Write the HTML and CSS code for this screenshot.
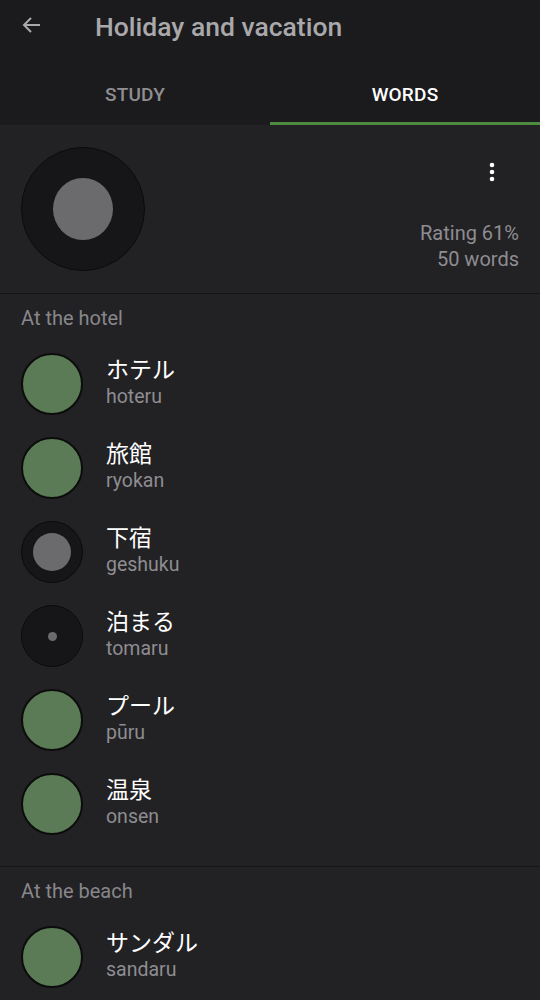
FILE: index.html
```html
<!DOCTYPE html>
<html>
<head>
<meta charset="utf-8">
<link rel="stylesheet" href="styles.css">
</head>
<body>
<div class="page">
  <header class="appbar">
    <svg class="back" width="24" height="24" viewBox="0 0 24 24"><path d="M20 12H5M11 5l-7 7 7 7" fill="none" stroke="#a9a8ab" stroke-width="2"/></svg>
    <h1 class="title">Holiday and vacation</h1>
  </header>
  <nav class="tabs">
    <div class="tab">STUDY</div>
    <div class="tab active">WORDS</div>
  </nav>
  <section class="summary">
    <div class="big-dot"><div class="big-inner"></div></div>
    <div class="summary-right">
      <svg class="kebab" width="6" height="20" viewBox="0 0 6 20"><circle cx="3" cy="3" r="2.3" fill="#fff"/><circle cx="3" cy="10" r="2.3" fill="#fff"/><circle cx="3" cy="17" r="2.3" fill="#fff"/></svg>
      <div class="stats">
        <div>Rating 61%</div>
        <div>50 words</div>
      </div>
    </div>
  </section>
  <section class="group">
    <div class="group-title">At the hotel</div>
    <div class="item"><div class="dot green"></div><div class="words"><div class="jp">ホテル</div><div class="ro">hoteru</div></div></div>
    <div class="item"><div class="dot green"></div><div class="words"><div class="jp">旅館</div><div class="ro">ryokan</div></div></div>
    <div class="item"><div class="dot dark"><div class="inner mid"></div></div><div class="words"><div class="jp">下宿</div><div class="ro">geshuku</div></div></div>
    <div class="item"><div class="dot dark"><div class="inner small"></div></div><div class="words"><div class="jp">泊まる</div><div class="ro">tomaru</div></div></div>
    <div class="item"><div class="dot green"></div><div class="words"><div class="jp">プール</div><div class="ro">pūru</div></div></div>
    <div class="item"><div class="dot green"></div><div class="words"><div class="jp">温泉</div><div class="ro">onsen</div></div></div>
  </section>
  <section class="group">
    <div class="group-title">At the beach</div>
    <div class="item"><div class="dot green"></div><div class="words"><div class="jp">サンダル</div><div class="ro">sandaru</div></div></div>
  </section>
</div>
</body>
</html>
```
FILE: styles.css
```css
html, body {
  margin: 0;
  padding: 0;
  background: #222124;
}
body {
  font-family: Roboto, "Noto Sans CJK JP", sans-serif;
}
.page {
  width: 540px;
  height: 1000px;
  overflow: hidden;
  background: #222124;
}
.appbar {
  height: 52px;
  background: #1b1a1d;
  display: flex;
  align-items: center;
  padding-left: 20px;
}
.back {
  display: block;
  margin-top: -2px;
}
.title {
  margin: 0 0 0 51px;
  font-size: 26.5px;
  font-weight: 500;
  color: #a9a8ab;
}
.tabs {
  display: flex;
  height: 73px;
  background: #1b1a1d;
}
.tab {
  flex: 1;
  box-sizing: border-box;
  padding-top: 31px;
  text-align: center;
  font-size: 19px;
  font-weight: 500;
  color: #8f8e92;
  letter-spacing: 0.2px;
}
.tab.active {
  color: #ffffff;
  border-bottom: 3px solid #4f8a41;
}
.summary {
  height: 168px;
  display: flex;
  align-items: center;
  justify-content: space-between;
  padding: 0 21px;
  border-bottom: 1px solid #151417;
}
.big-dot {
  width: 122px;
  height: 122px;
  border-radius: 50%;
  background: #161517;
  border: 1px solid #0b0a0c;
  display: flex;
  align-items: center;
  justify-content: center;
}
.big-inner {
  width: 60px;
  height: 62px;
  border-radius: 50%;
  background: #6b6a6d;
}
.summary-right {
  align-self: stretch;
  display: flex;
  flex-direction: column;
  align-items: flex-end;
  padding-top: 37px;
}
.kebab {
  display: block;
  margin-right: 24px;
}
.stats {
  margin-top: 38px;
  text-align: right;
  font-size: 20px;
  line-height: 26px;
  color: #8e8d91;
}
.group {
  border-bottom: 1px solid #161517;
  padding-bottom: 20px;
}
.group:last-child {
  border-bottom: none;
}
.group-title {
  height: 48px;
  display: flex;
  align-items: center;
  padding-left: 21px;
  font-size: 20px;
  color: #88878b;
}
.item {
  height: 84px;
  display: flex;
  align-items: center;
  padding-left: 21px;
}
.dot {
  width: 58px;
  height: 58px;
  border-radius: 50%;
  border: 2px solid #0c0c0c;
  display: flex;
  align-items: center;
  justify-content: center;
  flex-shrink: 0;
}
.dot.green {
  background: #5a7b56;
}
.dot.dark {
  background: #161517;
  border-color: #0b0a0c;
  border-width: 1px;
  width: 60px;
  height: 60px;
}
.inner {
  border-radius: 50%;
  background: #6b6a6d;
}
.inner.mid {
  width: 38px;
  height: 38px;
}
.inner.small {
  width: 9px;
  height: 9px;
}
.words {
  margin-left: 23px;
  margin-top: -2px;
}
.jp {
  font-size: 23px;
  line-height: 28px;
  color: #ffffff;
}
.ro {
  font-size: 19.5px;
  line-height: 24px;
  color: #8e8d91;
}
```
